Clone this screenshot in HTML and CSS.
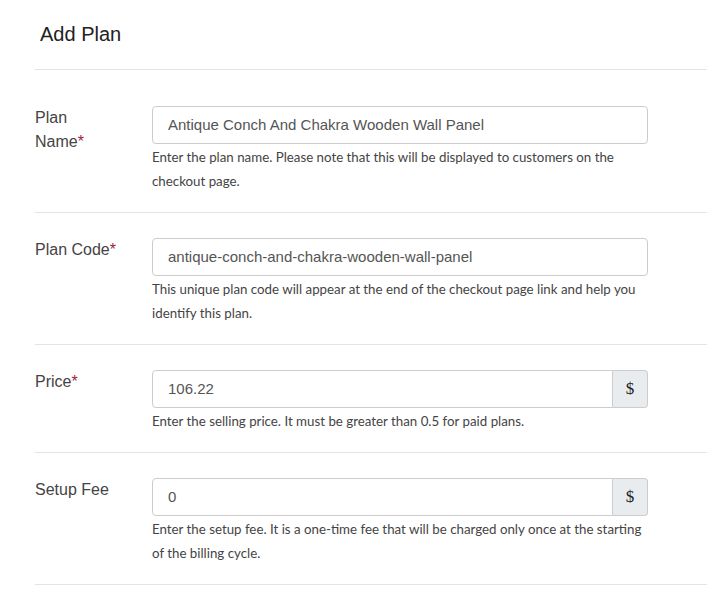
FILE: index.html
```html
<!DOCTYPE html>
<html>
<head>
<meta charset="utf-8">
<link rel="stylesheet" href="styles.css">
</head>
<body>
<div class="panel">
  <div class="header"><h1 class="title">Add Plan</h1></div>
  <div class="row first">
    <div class="label">Plan Name<span class="req">*</span></div>
    <div class="field">
      <div class="input">Antique Conch And Chakra Wooden Wall Panel</div>
      <div class="help">Enter the plan name. Please note that this will be displayed to customers on the checkout page.</div>
    </div>
  </div>
  <div class="row">
    <div class="label">Plan Code<span class="req">*</span></div>
    <div class="field">
      <div class="input">antique-conch-and-chakra-wooden-wall-panel</div>
      <div class="help">This unique plan code will appear at the end of the checkout page link and help you identify this plan.</div>
    </div>
  </div>
  <div class="row">
    <div class="label">Price<span class="req">*</span></div>
    <div class="field">
      <div class="group"><div class="input grouped">106.22</div><div class="addon">$</div></div>
      <div class="help">Enter the selling price. It must be greater than 0.5 for paid plans.</div>
    </div>
  </div>
  <div class="row">
    <div class="label">Setup Fee</div>
    <div class="field">
      <div class="group"><div class="input grouped">0</div><div class="addon">$</div></div>
      <div class="help">Enter the setup fee. It is a one-time fee that will be charged only once at the starting of the billing cycle.</div>
    </div>
  </div>
</div>
</body>
</html>
```
FILE: styles.css
```css
html, body { margin: 0; padding: 0; background: #fff; }
body { font-family: "Liberation Sans", Arial, sans-serif; }
.panel { width: 672px; margin-left: 35px; }
.header { height: 69px; border-bottom: 1px solid #e3e3e3; display: flex; align-items: center; }
.title { margin: 0 0 0 5px; font-size: 20px; font-weight: normal; color: #222; }
.row { display: flex; padding: 25px 0 20px; border-bottom: 1px solid #e3e3e3; }
.row.first { padding-top: 36px; }
.label { width: 84px; flex: none; margin-right: 33px; font-size: 16px; line-height: 24px; color: #444; }
.req { color: #a3203a; }
.field { width: 496px; }
.input { box-sizing: border-box; height: 38px; border: 1px solid #ccc; border-radius: 4px; padding: 0 15px; font-size: 15px; line-height: 36px; color: #555; }
.group { display: flex; }
.input.grouped { flex: 1; border-radius: 4px 0 0 4px; }
.addon { box-sizing: border-box; width: 35px; height: 38px; border: 1px solid #ccc; border-left: none; border-radius: 0 4px 4px 0; background: #e9ecef; font-family: "Liberation Serif", "Times New Roman", serif; font-size: 17px; color: #222; display: flex; align-items: center; justify-content: center; }
.help { font-family: Lato, "Open Sans", sans-serif; font-size: 13.3px; line-height: 24px; color: #444; margin-top: 1px; margin-bottom: -1px; }
```
